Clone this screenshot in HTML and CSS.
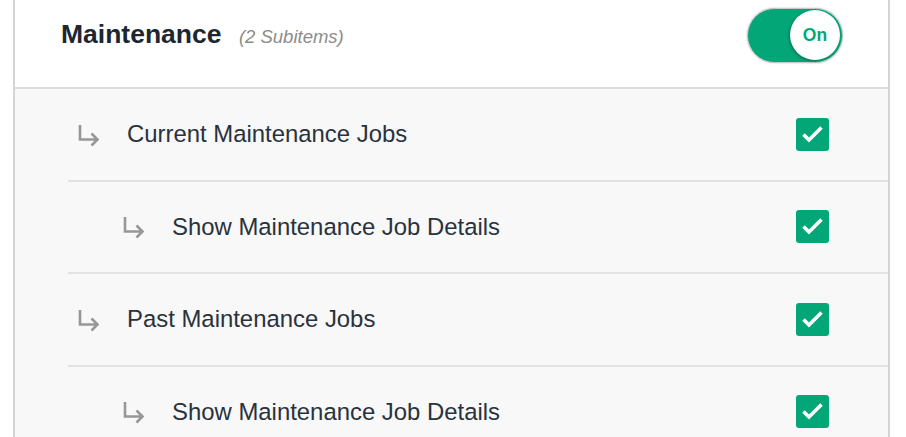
FILE: index.html
```html
<!DOCTYPE html>
<html lang="en">
<head>
    <meta charset="UTF-8">
    <meta name="viewport" content="width=device-width, initial-scale=1.0">
    <title>Maintenance</title>
    <link rel="stylesheet" href="styles.css">
</head>
<body>
    <div class="panel">
        <div class="panel-header">
            <h2>Maintenance <span class="count">(2 Subitems)</span></h2>
            <div class="toggle">
                <span class="knob">On</span>
            </div>
        </div>

        <div class="items">
            <div class="item">
                <svg class="arrow" viewBox="0 0 22 20"><path d="M2 0 V14.5 H19.5 M13.5 8.5 L19.5 14.5 L13.5 20.5"/></svg>
                <span class="label">Current Maintenance Jobs</span>
                <span class="check"><svg viewBox="0 0 33 33"><path d="M7.5 16.5 L13 22 L25.5 9.5"/></svg></span>
            </div>
            <div class="item sub">
                <svg class="arrow" viewBox="0 0 22 20"><path d="M2 0 V14.5 H19.5 M13.5 8.5 L19.5 14.5 L13.5 20.5"/></svg>
                <span class="label">Show Maintenance Job Details</span>
                <span class="check"><svg viewBox="0 0 33 33"><path d="M7.5 16.5 L13 22 L25.5 9.5"/></svg></span>
            </div>
            <div class="item">
                <svg class="arrow" viewBox="0 0 22 20"><path d="M2 0 V14.5 H19.5 M13.5 8.5 L19.5 14.5 L13.5 20.5"/></svg>
                <span class="label">Past Maintenance Jobs</span>
                <span class="check"><svg viewBox="0 0 33 33"><path d="M7.5 16.5 L13 22 L25.5 9.5"/></svg></span>
            </div>
            <div class="item sub">
                <svg class="arrow" viewBox="0 0 22 20"><path d="M2 0 V14.5 H19.5 M13.5 8.5 L19.5 14.5 L13.5 20.5"/></svg>
                <span class="label">Show Maintenance Job Details</span>
                <span class="check"><svg viewBox="0 0 33 33"><path d="M7.5 16.5 L13 22 L25.5 9.5"/></svg></span>
            </div>
        </div>
    </div>
</body>
</html>
```

FILE: styles.css
```css
/* Base */
* {
    margin: 0;
    padding: 0;
    box-sizing: border-box;
}

body {
    font-family: "Liberation Sans", Arial, sans-serif;
    background-color: #fff;
    height: 437px;
    overflow: hidden;
}

/* Panel */
.panel {
    margin-left: 13px;
    width: 877px;
    border-left: 2px solid #d4d4d4;
    border-right: 2px solid #d4d4d4;
    background-color: #f8f8f8;
    min-height: 500px;
}

.panel-header {
    display: flex;
    align-items: center;
    justify-content: space-between;
    height: 89px;
    padding: 0 45px 0 46px;
    background-color: #fff;
    border-bottom: 2px solid #dcdcdc;
}

.panel-header h2 {
    font-size: 26.5px;
    font-weight: bold;
    color: #1d2732;
    margin-top: -18px;
}

.count {
    font-size: 18.5px;
    font-weight: normal;
    font-style: italic;
    color: #8c8c8c;
    margin-left: 10px;
}

/* Toggle */
.toggle {
    display: flex;
    justify-content: flex-end;
    align-items: center;
    width: 96px;
    height: 55px;
    margin-top: -17px;
    padding: 2px;
    border-radius: 28px;
    background-color: #03a677;
    border: 1px solid #c9c9c9;
    box-shadow: 0 0 2px rgba(0, 0, 0, 0.25);
}

.knob {
    display: flex;
    align-items: center;
    justify-content: center;
    width: 50px;
    height: 50px;
    border-radius: 50%;
    background-color: #fff;
    color: #03a677;
    font-weight: bold;
    font-size: 17.5px;
    box-shadow: -1px 1px 3px rgba(0, 0, 0, 0.3);
}

/* Items */
.items {
    margin-left: 53px;
}

.item {
    display: flex;
    align-items: center;
    height: 92.5px;
    padding: 0 59px 0 10px;
    border-bottom: 2px solid #e2e2e2;
}

.item.sub {
    padding-left: 55px;
}

.arrow {
    width: 22px;
    height: 20px;
    overflow: visible;
    fill: none;
    stroke: #979797;
    stroke-width: 2.6;
    margin-right: 27px;
    margin-top: 1px;
}

.label {
    flex: 1;
    font-size: 23.9px;
    color: #29323d;
}

.check {
    width: 33px;
    height: 33px;
    border-radius: 3px;
    background-color: #03a677;
}

.check svg {
    display: block;
    width: 33px;
    height: 33px;
    fill: none;
    stroke: #fff;
    stroke-width: 3.6;
}
```
